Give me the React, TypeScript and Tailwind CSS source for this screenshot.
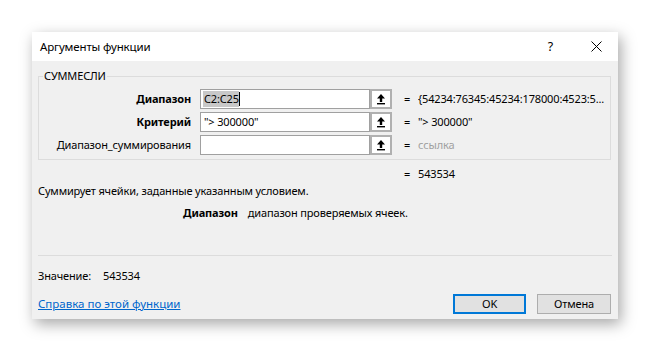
import React from "react";

function UpArrow() {
  return (
    <svg width="10" height="12" viewBox="0 0 10 12">
      <path d="M5 1 L9 5.5 L6.2 5.5 L6.2 9 L3.8 9 L3.8 5.5 L1 5.5 Z" fill="#000" />
      <rect x="1" y="10" width="8" height="1.4" fill="#000" />
    </svg>
  );
}

function Row({
  label,
  bold,
  value,
  valueClass,
  children,
}: {
  label: string;
  bold?: boolean;
  value: string;
  valueClass?: string;
  children?: React.ReactNode;
}) {
  return (
    <div className="flex items-center h-[20px]">
      <div className={`w-[152px] text-right ${bold ? "font-bold" : ""}`}>{label}</div>
      <div className="ml-[9px] flex h-[20px]">
        <div className="w-[170px] h-[20px] border border-[#a0a0a0] bg-white flex items-center pl-[2px] overflow-hidden whitespace-nowrap">
          {children}
        </div>
        <div className="w-[22px] h-[20px] border-2 border-[#b0b0b0] bg-white flex items-center justify-center">
          <UpArrow />
        </div>
      </div>
      <div className="ml-[12px] w-[14px]">=</div>
      <div className={`w-[192px] whitespace-nowrap overflow-hidden ${valueClass ?? ""}`}>{value}</div>
    </div>
  );
}

export default function App() {
  return (
    <div className="w-[650px] h-[351px] bg-white pt-[32px] pl-[32px] font-['Noto_Sans',sans-serif] text-[11px] tracking-[-0.15px] leading-[16px] text-black">
      <div className="w-[586px] h-[287px] flex flex-col bg-[#f0f0f0] shadow-[3px_5px_14px_rgba(0,0,0,0.35)]">
        <div className="h-[29px] bg-white flex items-center pl-[8px] shrink-0">
          <span className="text-[11.5px]">Аргументы функции</span>
          <span className="ml-auto text-[12.5px] mr-[38px]">?</span>
          <svg width="11" height="11" viewBox="0 0 11 11" className="mr-[16px]">
            <path d="M0.5 0.5 L10.5 10.5 M10.5 0.5 L0.5 10.5" stroke="#000" strokeWidth="1" />
          </svg>
        </div>
        <div className="flex-1 flex flex-col px-[6px]">
          <fieldset className="mt-[7px] w-[573px] border border-[#dcdcdc] pb-[4px]">
            <legend className="ml-[4px] px-[1px] leading-[16px]">СУММЕСЛИ</legend>
            <div className="flex flex-col gap-[3px] pt-[5px]">
              <Row label="Диапазон" bold value="{54234:76345:45234:178000:4523:5...">
                <span className="bg-[#c8c8c8] pl-[1px]">C2:C25</span>
                <span className="w-[1px] h-[14px] bg-black"></span>
              </Row>
              <Row label="Критерий" bold value={'"> 300000"'}>
                <span className="pl-[1px]">{'"> 300000"'}</span>
              </Row>
              <Row label="Диапазон_суммирования" value="ссылка" valueClass="text-[#a0a0a0]" />
            </div>
          </fieldset>
          <div className="mt-[6px] flex">
            <span className="ml-[366px] w-[14px]">=</span>
            <span>543534</span>
          </div>
          <div className="mt-[1px]">Суммирует ячейки, заданные указанным условием.</div>
          <div className="mt-[6px] pl-[145px] flex">
            <span className="font-bold">Диапазон</span>
            <span className="ml-[10px]">диапазон проверяемых ячеек.</span>
          </div>
          <div className="mt-[34px] h-[1px] w-[574px] bg-[#dcdcdc]"></div>
          <div className="mt-[12px] flex">
            <span>Значение:</span>
            <span className="ml-[12px]">543534</span>
          </div>
          <div className="mt-[10px] flex items-center">
            <a className="text-[#0066cc] underline text-[11.5px] tracking-normal">Справка по этой функции</a>
            <button className="ml-auto w-[73px] h-[20px] border-2 border-[#0078d7] bg-[#e1e1e1] flex items-center justify-center">
              OK
            </button>
            <button className="ml-[11px] mr-[1px] w-[74px] h-[20px] border border-[#adadad] bg-[#e1e1e1] flex items-center justify-center">
              Отмена
            </button>
          </div>
        </div>
      </div>
    </div>
  );
}
